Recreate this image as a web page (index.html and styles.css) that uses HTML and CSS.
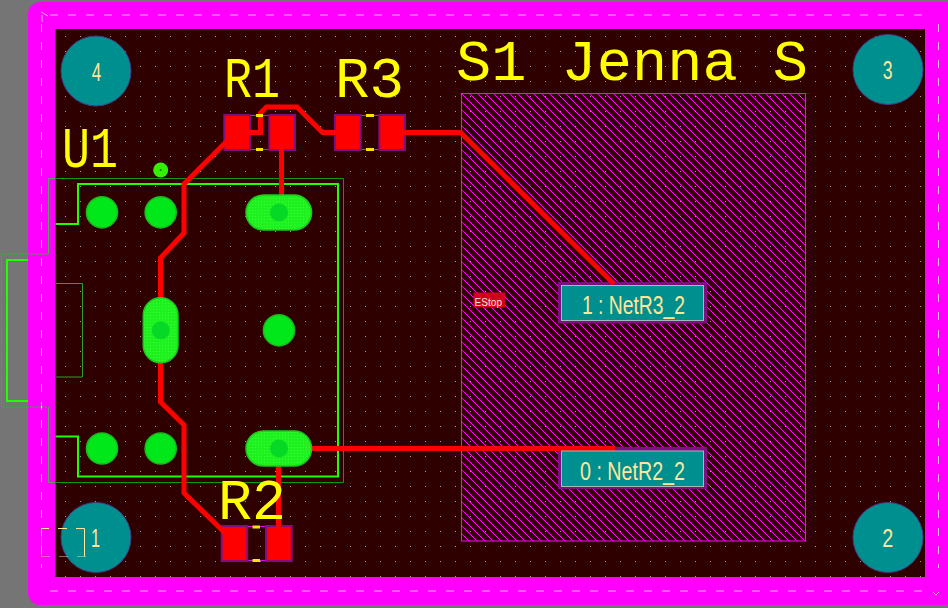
FILE: index.html
```html
<!DOCTYPE html>
<html lang="en">
<head>
<meta charset="utf-8">
<title>PCB layout</title>
<link rel="stylesheet" href="styles.css">
</head>
<body>
<svg class="canvas" width="948" height="608" viewBox="0 0 948 608">
  <defs>
    <pattern id="grid" x="65" y="36" width="15" height="15" patternUnits="userSpaceOnUse">
      <rect class="grid-dot" width="1" height="1"/>
    </pattern>
    <pattern id="hatch" x="461" y="93" width="8" height="8" patternUnits="userSpaceOnUse">
      <path class="hatch-line" d="M-1 -1L9 9M-9 -1L1 9M7 -1L17 9"/>
    </pattern>
    <pattern id="mesh" width="3" height="3" patternUnits="userSpaceOnUse">
      <rect class="mesh-bg" width="3" height="3"/>
      <rect class="mesh-dot" width="1" height="1"/>
    </pattern>
  </defs>

  <rect class="board" x="28" y="2" width="930" height="603" rx="12"/>
  <rect class="inner" x="55.5" y="29" width="869.5" height="548"/>
  <rect class="hatch-fill" x="461.5" y="93.5" width="344" height="447.5"/>
  <rect class="hatch-edge" x="461.5" y="93.5" width="344" height="447.5"/>
  <rect class="grid-fill" x="55.5" y="29" width="869.5" height="548"/>

  <path class="keepout" d="M50 15H930M41.5 24V568M50 591H930M938.5 24V568"/>
  <path class="corner" d="M41 12L48 16M42 15V22M933 592L936 595L939 592"/>

  <g class="mounts">
    <circle cx="96" cy="71" r="35"/>
    <circle cx="888" cy="69.5" r="35"/>
    <circle cx="888" cy="537.5" r="35"/>
    <circle cx="96" cy="537.5" r="35"/>
  </g>
  <text class="mount-label" x="91.7" y="81" textLength="9.5" lengthAdjust="spacingAndGlyphs">4</text>
  <text class="mount-label" x="882.7" y="79.3" textLength="9.8" lengthAdjust="spacingAndGlyphs">3</text>
  <text class="mount-label" x="882.3" y="547.3" textLength="11" lengthAdjust="spacingAndGlyphs">2</text>
  <text class="mount-label" x="91" y="547.3" textLength="9" lengthAdjust="spacingAndGlyphs">1</text>

  <path class="assembly" d="M41.5 528.5H49M58 528.5H67M76 528.5H84.5V556.5"/>
  <path class="assembly-dim" d="M41.5 530V556.5M41.5 556.5H50M59 556.5H68M77 556.5H86"/>

  <path class="outline-thin" d="M55.5 178.5H343.5V482.5H55.5"/>
  <path class="outline-over" d="M55.5 178.5H48.5V254M48.5 407V482.5H55.5"/>
  <path class="outline-dash" d="M48 254H1.5V407H48"/>
  <path class="outline-bright" d="M28 260H7V401H28"/>
  <path class="outline-bright" d="M55.5 224H78V184H338V476.5H78V436.5H55.5"/>
  <path class="outline-conn" d="M55.5 283.5H82.5V377H55.5"/>

  <g class="holes">
    <circle cx="102" cy="212.3" r="15.6"/>
    <circle cx="160.7" cy="212.3" r="15.6"/>
    <circle cx="102" cy="448.5" r="15.6"/>
    <circle cx="160.7" cy="448.5" r="15.6"/>
    <circle cx="279" cy="330.3" r="15.6"/>
  </g>

  <g class="res-body">
    <path d="M251 115.5H268M251 149.5H268M361 115.5H378M361 149.5H378M248 526.5H265M248 560.5H265"/>
  </g>
  <g class="pads">
    <rect x="224.3" y="115" width="25.7" height="35"/>
    <rect x="269.3" y="115" width="25.7" height="35"/>
    <rect x="335" y="115" width="25.7" height="35"/>
    <rect x="379.3" y="115" width="25.7" height="35"/>
    <rect x="221.7" y="526" width="25.5" height="35"/>
    <rect x="266" y="526" width="25.7" height="35"/>
  </g>

  <rect class="net-mask" x="558" y="282" width="149" height="41.5"/>
  <rect class="net-mask" x="558" y="447" width="149" height="42"/>

  <g class="tracks">
    <path d="M245 132.5H260.5V113L266.5 107H297L322.5 132.5H346"/>
    <path d="M230 138L184 184V233L160.5 258V300M160.5 362V402L184 425V493L226 534"/>
    <path d="M281.5 140V197"/>
    <path d="M395 132.5H460.5L614 284"/>
    <path d="M309 448.5H615"/>
    <path d="M278.5 462V535"/>
  </g>

  <g class="slots">
    <rect x="246" y="195" width="65.6" height="35" rx="17.5"/>
    <rect x="246" y="431" width="65.6" height="35" rx="17.5"/>
    <rect x="143.3" y="297.7" width="34.7" height="65" rx="17.3"/>
  </g>
  <g class="slot-holes">
    <circle cx="279" cy="212.5" r="9"/>
    <circle cx="279" cy="448.5" r="9"/>
    <circle cx="160.7" cy="330.3" r="9"/>
  </g>

  <circle class="via" cx="160.7" cy="170" r="7.5"/>
  <circle class="via-hole" cx="160.7" cy="170" r="1"/>

  <g class="res-mark">
    <path d="M256 115.5H263M256 149.5H263M366 115.5H374M366 149.5H374M252.5 527H260M252.5 560.5H260"/>
  </g>

  <text class="silk" x="224" y="97" textLength="56" lengthAdjust="spacingAndGlyphs">R1</text>
  <text class="silk" x="335" y="97" textLength="69" lengthAdjust="spacingAndGlyphs">R3</text>
  <text class="silk" x="218" y="519" textLength="68" lengthAdjust="spacingAndGlyphs">R2</text>
  <text class="silk" x="62" y="167" textLength="56" lengthAdjust="spacingAndGlyphs">U1</text>
  <text class="silk" x="456" y="80" textLength="352" lengthAdjust="spacingAndGlyphs">S1 Jenna S</text>

  <rect class="estop-bg" x="473.5" y="292.5" width="31.5" height="15"/>
  <text class="estop" x="474.5" y="306.3" textLength="27.5" lengthAdjust="spacingAndGlyphs">EStop</text>

  <rect class="net-box" x="561.5" y="285.5" width="142" height="35"/>
  <text class="net-label" x="582" y="313.5" textLength="103" lengthAdjust="spacingAndGlyphs">1 : NetR3_2</text>
  <rect class="net-box" x="561.5" y="451" width="142" height="35.5"/>
  <text class="net-label" x="580" y="479.5" textLength="105" lengthAdjust="spacingAndGlyphs">0 : NetR2_2</text>
</svg>
</body>
</html>
```
FILE: styles.css
```css
html, body {
  margin: 0;
  padding: 0;
  background: #757575;
  overflow: hidden;
}
.canvas { display: block; }
.board { fill: #ff00ff; }
.inner { fill: #2f0000; }
.grid-dot { fill: #a89a9a; }
.grid-fill { fill: url(#grid); }
.hatch-line { stroke: #ff00ff; stroke-width: 1; fill: none; shape-rendering: crispEdges; }
.hatch-fill { fill: url(#hatch); }
.hatch-edge { fill: none; stroke: #ff00ff; stroke-width: 1; }
.mesh-bg { fill: #1ff01f; }
.mesh-dot { fill: #33ff33; }

.keepout { fill: none; stroke: #f7b8f7; stroke-width: 1; stroke-dasharray: 8 10; }
.corner { fill: none; stroke: #f7b8f7; stroke-width: 1; }

.mounts circle { fill: #008f8f; stroke: #4a3a8a; stroke-width: 1; }
.mount-label {
  font-family: "Liberation Sans", sans-serif;
  font-size: 25px;
  fill: #ffe69a;
}
.assembly { fill: none; stroke: #ffe69a; stroke-width: 1; }
.assembly-dim { fill: none; stroke: #ffe69a; stroke-width: 1; opacity: 0.45; }

.outline-thin { fill: none; stroke: #119911; stroke-width: 1; }
.outline-over { fill: none; stroke: #5f9f5f; stroke-width: 1; }
.outline-dash { fill: none; stroke: #22c022; stroke-width: 1; stroke-dasharray: 2 1; }
.outline-bright { fill: none; stroke: #22ff00; stroke-width: 2; }
.outline-conn { fill: none; stroke: #2f9f2f; stroke-width: 1; }

.holes circle { fill: #00e81a; stroke: #1cb81c; stroke-width: 1.5; }
.tracks path { fill: none; stroke: #ff0000; stroke-width: 5; stroke-linejoin: miter; }

.slots rect { fill: url(#mesh); stroke: #1cc81c; stroke-width: 1.5; }
.slot-holes circle { fill: #06d826; }
.via { fill: #33f000; }
.via-hole { fill: #0a7a0a; }

.res-body path { fill: none; stroke: #e010e0; stroke-width: 1; }
.res-mark path { fill: none; stroke: #ffe600; stroke-width: 3; }
.pads rect { fill: #ff0000; stroke: #7f0f7f; stroke-width: 2; }

.silk {
  font-family: "Liberation Mono", monospace;
  font-size: 58px;
  fill: #ffff00;
}
.estop-bg { fill: #e0001a; opacity: 0.9; }
.estop {
  font-family: "Liberation Sans", sans-serif;
  font-size: 10px;
  fill: #ffe0e0;
}
.net-mask { fill: #7f0f7f; }
.net-box { fill: #008f8f; stroke: #a8b8b8; stroke-width: 1; }
.net-label {
  font-family: "Liberation Sans", sans-serif;
  font-size: 25px;
  fill: #ffe69a;
}
```
